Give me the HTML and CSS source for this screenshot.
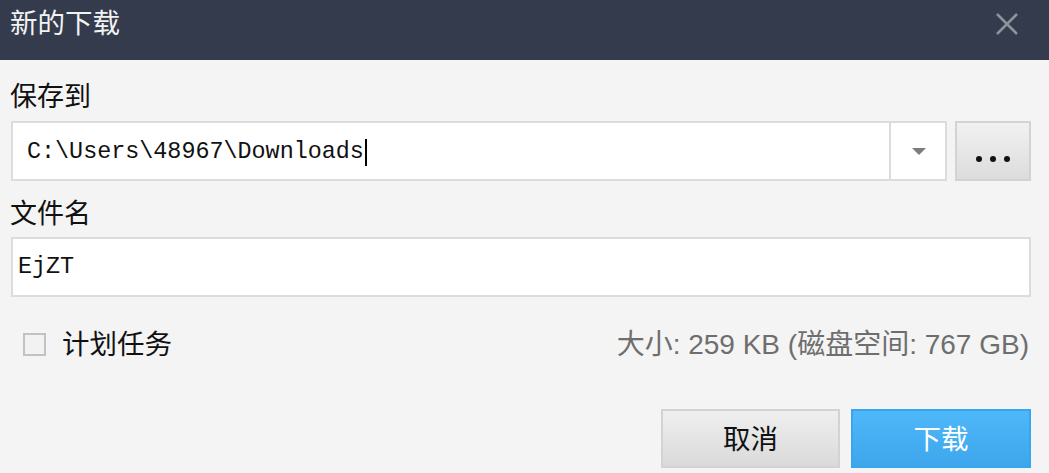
FILE: index.html
```html
<!DOCTYPE html>
<html lang="zh-CN">
<head>
<meta charset="utf-8">
<title>新的下载</title>
<link rel="stylesheet" href="styles.css">
</head>
<body>
<div class="dialog">
  <header class="titlebar">
    <span class="title">新的下载</span>
    <svg class="close" width="24" height="24" viewBox="0 0 24 24"><path d="M2 2 L22 22 M22 2 L2 22" stroke="#8c919b" stroke-width="2.6" fill="none"/></svg>
  </header>
  <main class="body">
    <div class="label label-first">保存到</div>
    <div class="path-row">
      <div class="combo">
        <div class="combo-text">C:\Users\48967\Downloads<span class="caret"></span></div>
        <div class="combo-arrow"><span class="tri"></span></div>
      </div>
      <button class="browse"><span class="dot"></span><span class="dot"></span><span class="dot"></span></button>
    </div>
    <div class="label label-second">文件名</div>
    <div class="name-input">EjZT</div>
    <div class="option-row">
      <label class="check"><span class="box"></span><span class="check-text">计划任务</span></label>
      <span class="size">大小: 259 KB (磁盘空间: 767 GB)</span>
    </div>
    <div class="actions">
      <button class="btn btn-cancel">取消</button>
      <button class="btn btn-ok">下载</button>
    </div>
  </main>
</div>
</body>
</html>
```

FILE: styles.css
```css
* { box-sizing: border-box; }
html, body { margin: 0; padding: 0; }
body {
  width: 1049px;
  height: 473px;
  background: #f4f4f4;
  font-family: "Noto Sans CJK SC", sans-serif;
  overflow: hidden;
}
.dialog { display: flex; flex-direction: column; height: 473px; }
.titlebar {
  height: 60px;
  background: #333b4d;
  display: flex;
  align-items: center;
  justify-content: space-between;
  padding: 0 30px 0 10px;
}
.title {
  color: #f2f2f2;
  font-size: 27.5px;
  line-height: 30px;
  margin-top: -18px;
}
.close { margin-top: -12px; }
.body {
  display: flex;
  flex-direction: column;
  padding: 0 18px 0 11px;
}
.label {
  display: flex;
  align-items: center;
  font-size: 27px;
  color: #111;
  margin-left: -1px;
}
.label-first { height: 61px; padding-top: 8px; }
.label-second { height: 56px; padding-top: 4px; }
.path-row { display: flex; height: 60px; gap: 8px; }
.combo {
  flex: 1;
  display: flex;
  background: #fff;
  border: 2px solid #dcdcdc;
}
.combo-text {
  flex: 1;
  display: flex;
  align-items: center;
  padding-left: 14px;
  padding-top: 2px;
  font-family: "Liberation Mono", monospace;
  font-size: 23.4px;
  color: #111;
}
.caret {
  display: inline-block;
  width: 2px;
  height: 27px;
  background: #000;
  margin-left: 1px;
}
.combo-arrow {
  width: 56px;
  border-left: 2px solid #dcdcdc;
  display: flex;
  align-items: center;
  justify-content: center;
}
.tri {
  width: 0; height: 0;
  border-left: 7px solid transparent;
  border-right: 7px solid transparent;
  border-top: 7px solid #7d7d7d;
  margin-left: 2px;
}
.browse {
  width: 76px;
  border: 2px solid #d3d3d3;
  background: linear-gradient(#f1f1f1, #dcdcdc);
  display: flex;
  align-items: center;
  justify-content: center;
  gap: 8px;
  padding: 16px 0 0 0;
  margin: 0;
}
.dot { width: 6px; height: 6px; border-radius: 50%; background: #111; }
.name-input {
  height: 60px;
  background: #fff;
  border: 2px solid #dcdcdc;
  display: flex;
  align-items: center;
  padding-left: 5px;
  font-family: "Liberation Mono", monospace;
  font-size: 23.4px;
  color: #111;
}
.option-row {
  display: flex;
  justify-content: space-between;
  align-items: center;
  height: 94px;
  padding-bottom: 4px;
  padding-right: 2px;
}
.check { display: flex; align-items: center; gap: 16px; padding-left: 12px; }
.box {
  width: 23px;
  height: 23px;
  border: 2px solid #c2c2c2;
  background: #f2f2f2;
  margin-top: 4px;
}
.check-text { font-size: 27.5px; color: #111; }
.size {
  font-family: "Liberation Sans", "Noto Sans CJK SC", sans-serif;
  font-size: 28px;
  color: #6e6e6e;
}
.actions {
  display: flex;
  justify-content: flex-end;
  gap: 11px;
  margin-top: 18px;
}
.btn {
  width: 180px;
  height: 59px;
  font-family: "Noto Sans CJK SC", sans-serif;
  font-size: 27.5px;
  margin: 0;
  padding: 0 0 4px 0;
}
.btn-cancel {
  width: 179px;
  border: 2px solid #d3d3d3;
  background: linear-gradient(#efefef, #dadada);
  color: #111;
}
.btn-ok {
  border: 2px solid #3aa5ec;
  background: linear-gradient(#4eb8fa, #3ea6ec);
  color: #fff;
}
```
